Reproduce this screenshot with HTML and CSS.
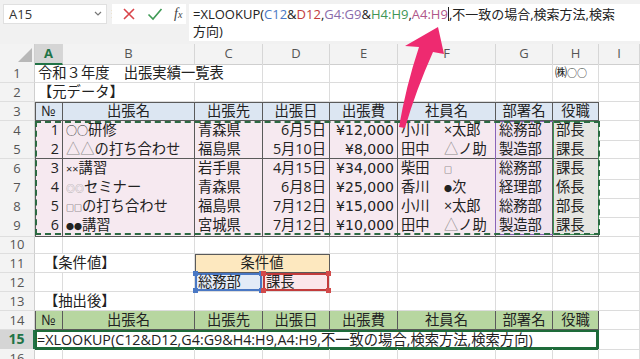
FILE: index.html
```html
<!DOCTYPE html>
<html lang="ja">
  <head>
    <meta charset="UTF-8" />
    <title>XLOOKUP</title>
    <link rel="stylesheet" href="styles.css">
  </head>
  <body>
    <div class="topbar">
      <div class="namebox">
        <span>A15</span>
        <svg class="chev" width="8" height="6" viewBox="0 0 8 6"><polyline points="1,1 4,4 7,1" fill="none" stroke="#777" stroke-width="1.2"/></svg>
      </div>
      <div class="grip">&#8942;</div>
      <div class="iconbox">
        <svg width="14" height="14" viewBox="0 0 14 14"><path d="M2 2 L12 12 M12 2 L2 12" stroke="#d9444a" stroke-width="1.6" fill="none"/></svg>
        <svg width="16" height="14" viewBox="0 0 16 14"><polyline points="1.5,7.5 6,12 14.5,2" stroke="#3f9a55" stroke-width="1.6" fill="none"/></svg>
        <span class="fx">f<span class="fx-x">x</span></span>
      </div>
      <div class="formula">
        <div class="fline">=XLOOKUP(<span class="r-blue">C12</span>&amp;<span class="r-red">D12</span>,<span class="r-purple">G4:G9</span>&amp;<span class="r-green">H4:H9</span>,<span class="r-pink">A4:H9</span><span class="caret"></span>,不一致の場合,検索方法,検索</div>
        <div class="fline">方向)</div>
      </div>
    </div>

    <div class="sheet">
      <div class="row colhead">
        <div class="corner"><svg width="14" height="14" viewBox="0 0 14 14"><polygon points="14,0 14,14 0,14" fill="#b8b8b8"/></svg></div>
        <div class="ch sel">A</div>
        <div class="ch">B</div>
        <div class="ch">C</div>
        <div class="ch">D</div>
        <div class="ch">E</div>
        <div class="ch">F</div>
        <div class="ch">G</div>
        <div class="ch">H</div>
        <div class="ch">I</div>
      </div>

      <div class="row">
        <div class="rh">1</div>
        <div class="c s3">令和３年度　出張実績一覧表</div>
        <div class="c"></div><div class="c"></div><div class="c"></div><div class="c"></div>
        <div class="c co"><span class="kabu">㈱</span>○○</div>
        <div class="c"></div>
      </div>

      <div class="row">
        <div class="rh">2</div>
        <div class="c s2">【元データ】</div>
        <div class="c"></div><div class="c"></div><div class="c"></div><div class="c"></div><div class="c"></div><div class="c"></div>
        <div class="c"></div>
      </div>

      <div class="row">
        <div class="rh">3</div>
        <div class="c t th l tp">№</div>
        <div class="c t th tp">出張名</div>
        <div class="c t th tp">出張先</div>
        <div class="c t th tp">出張日</div>
        <div class="c t th tp">出張費</div>
        <div class="c t th tp">社員名</div>
        <div class="c t th tp">部署名</div>
        <div class="c t th tp">役職</div>
        <div class="c"></div>
      </div>

      <div class="block">
        <div class="row">
          <div class="rh">4</div>
          <div class="c t d l num">1</div>
          <div class="c t d"><span class="sm">○○</span>研修</div>
          <div class="c t d">青森県</div>
          <div class="c t d num">6月5日</div>
          <div class="c t d num yen">¥12,000</div>
          <div class="c t d">小川　×太郎</div>
          <div class="c t d dg">総務部</div>
          <div class="c t d dh">部長</div>
          <div class="c"></div>
        </div>
        <div class="row">
          <div class="rh">5</div>
          <div class="c t d l num">2</div>
          <div class="c t d"><span class="lt">△△</span>の打ち合わせ</div>
          <div class="c t d">福島県</div>
          <div class="c t d num">5月10日</div>
          <div class="c t d num yen">¥8,000</div>
          <div class="c t d">田中　<span class="lt">△</span>ノ助</div>
          <div class="c t d dg">製造部</div>
          <div class="c t d dh">課長</div>
          <div class="c"></div>
        </div>
        <div class="row">
          <div class="rh">6</div>
          <div class="c t d l num">3</div>
          <div class="c t d"><span class="xx">××</span>講習</div>
          <div class="c t d">岩手県</div>
          <div class="c t d num">4月15日</div>
          <div class="c t d num yen">¥34,000</div>
          <div class="c t d">柴田　<span class="xs">□</span></div>
          <div class="c t d dg">総務部</div>
          <div class="c t d dh">課長</div>
          <div class="c"></div>
        </div>
        <div class="row">
          <div class="rh">7</div>
          <div class="c t d l num">4</div>
          <div class="c t d"><span class="ring">◎◎</span>セミナー</div>
          <div class="c t d">青森県</div>
          <div class="c t d num">6月8日</div>
          <div class="c t d num yen">¥25,000</div>
          <div class="c t d">香川　<span class="xs">●</span>次</div>
          <div class="c t d dg">経理部</div>
          <div class="c t d dh">係長</div>
          <div class="c"></div>
        </div>
        <div class="row">
          <div class="rh">8</div>
          <div class="c t d l num">5</div>
          <div class="c t d"><span class="xs">□□</span>の打ち合わせ</div>
          <div class="c t d">福島県</div>
          <div class="c t d num">7月12日</div>
          <div class="c t d num yen">¥15,000</div>
          <div class="c t d">小川　×太郎</div>
          <div class="c t d dg">総務部</div>
          <div class="c t d dh">部長</div>
          <div class="c"></div>
        </div>
        <div class="row">
          <div class="rh">9</div>
          <div class="c t d l num">6</div>
          <div class="c t d"><span class="xs">●●</span>講習</div>
          <div class="c t d">宮城県</div>
          <div class="c t d num">7月12日</div>
          <div class="c t d num yen">¥10,000</div>
          <div class="c t d">田中　<span class="lt">△</span>ノ助</div>
          <div class="c t d dg">製造部</div>
          <div class="c t d dh">課長</div>
          <div class="c"></div>
        </div>
        <div class="ref ref-g"></div>
        <div class="ref ref-h"></div>
        <div class="ants"></div>
      </div>

      <div class="row">
        <div class="rh">10</div>
        <div class="c"></div><div class="c"></div><div class="c"></div><div class="c"></div><div class="c"></div>
        <div class="c"></div><div class="c"></div><div class="c"></div><div class="c"></div>
      </div>

      <div class="row">
        <div class="rh">11</div>
        <div class="c s2 ind">【条件値】</div>
        <div class="c s2 cond">条件値</div>
        <div class="c"></div><div class="c"></div><div class="c"></div><div class="c"></div><div class="c"></div>
      </div>

      <div class="row">
        <div class="rh">12</div>
        <div class="c"></div><div class="c"></div>
        <div class="c pick pick-blue">総務部<i class="h tl"></i><i class="h tr"></i><i class="h bl"></i><i class="h br"></i></div>
        <div class="c pick pick-red">課長<i class="h tl"></i><i class="h tr"></i><i class="h bl"></i><i class="h br"></i></div>
        <div class="c"></div><div class="c"></div><div class="c"></div><div class="c"></div><div class="c"></div>
      </div>

      <div class="row">
        <div class="rh">13</div>
        <div class="c s2 ind">【抽出後】</div>
        <div class="c"></div><div class="c"></div><div class="c"></div><div class="c"></div><div class="c"></div><div class="c"></div>
        <div class="c"></div>
      </div>

      <div class="row">
        <div class="rh">14</div>
        <div class="c t tg l">№</div>
        <div class="c t tg">出張名</div>
        <div class="c t tg">出張先</div>
        <div class="c t tg">出張日</div>
        <div class="c t tg">出張費</div>
        <div class="c t tg">社員名</div>
        <div class="c t tg">部署名</div>
        <div class="c t tg">役職</div>
        <div class="c"></div>
      </div>

      <div class="row">
        <div class="rh active">15</div>
        <div class="c s8 edit">=XLOOKUP(C12&amp;D12,G4:G9&amp;H4:H9,A4:H9,不一致の場合,検索方法,検索方向)</div>
        <div class="c"></div>
      </div>

      <div class="row">
        <div class="rh">16</div>
        <div class="c"></div><div class="c"></div><div class="c"></div><div class="c"></div><div class="c"></div>
        <div class="c"></div><div class="c"></div><div class="c"></div><div class="c"></div>
      </div>
    </div>

    <svg class="arrow" width="640" height="359" viewBox="0 0 640 359">
      <path d="M438 27 L405 46 L419 47 Q406 86 399 127 L405 128 Q416 90 433 52 L444 54 Z" fill="#ee2a70"/>
    </svg>
  </body>
</html>
```

FILE: styles.css
```css
body {
  margin: 0;
  width: 640px;
  height: 359px;
  overflow: hidden;
  position: relative;
  background: #fff;
  font-family: "Open Sans", "Noto Sans CJK JP", sans-serif;
  color: #222;
}

/* formula bar */
.topbar {
  height: 44px;
  box-sizing: border-box;
  background: #f1f1f1;
  display: flex;
  align-items: flex-start;
  padding: 4px 0 0 3px;
}

.namebox {
  width: 104px;
  height: 20px;
  box-sizing: border-box;
  background: #fff;
  border: 1px solid #e0e0e0;
  display: flex;
  align-items: center;
  justify-content: space-between;
  padding: 0 4px 0 5px;
  font-size: 13px;
  color: #333;
}

.grip {
  width: 5px;
  font-size: 11px;
  color: #aaa;
  line-height: 20px;
  text-align: center;
}

.iconbox {
  width: 74px;
  height: 20px;
  box-sizing: border-box;
  background: #fff;
  display: flex;
  align-items: center;
  gap: 11px;
  padding-left: 10px;
}

.fx {
  font-family: "Liberation Serif", serif;
  font-style: italic;
  font-size: 14px;
  line-height: 14px;
  color: #444;
}

.fx-x {
  font-size: 10px;
}

.formula {
  margin-left: 3px;
  flex: 1;
  height: 37px;
  box-sizing: border-box;
  background: #fff;
  padding: 2px 0 0 4px;
  font-size: 13px;
  color: #222;
}

.fline {
  height: 17px;
  line-height: 16px;
  white-space: nowrap;
}

.caret {
  display: inline-block;
  width: 1px;
  height: 14px;
  background: #222;
  vertical-align: -2px;
}

.r-blue { color: #4a78c4; }
.r-red { color: #c23b3b; }
.r-purple { color: #8a6bab; }
.r-green { color: #3e9656; }
.r-pink { color: #b0578a; }

/* grid */
.row {
  display: grid;
  grid-template-columns: 35px 28px 132px 68px 67px 68px 98px 57px 46px 1fr;
  height: 19px;
}

.colhead {
  height: 20px;
  background: #f3f3f3;
}

.corner {
  box-sizing: border-box;
  border-right: 1px solid #cfcfcf;
  border-bottom: 1px solid #cfcfcf;
  display: flex;
  align-items: flex-end;
  justify-content: flex-end;
  padding: 0 2px 2px 0;
}

.ch {
  box-sizing: border-box;
  border-right: 1px solid #d6d6d6;
  border-bottom: 1px solid #cfcfcf;
  text-align: center;
  font-size: 13px;
  line-height: 19px;
  color: #555;
}

.ch.sel {
  background: #d5d5d5;
  border-bottom: 2px solid #217346;
  color: #217346;
  font-weight: bold;
}

.rh {
  box-sizing: border-box;
  background: #f3f3f3;
  border-right: 1px solid #cfcfcf;
  border-bottom: 1px solid #dedede;
  text-align: center;
  font-size: 13px;
  line-height: 18px;
  color: #555;
}

.rh.active {
  background: #d5d5d5;
  border-right: 2px solid #217346;
  color: #217346;
  font-weight: bold;
  font-size: 14px;
}

.c {
  box-sizing: border-box;
  border-right: 1px solid #dcdcdc;
  border-bottom: 1px solid #dcdcdc;
  padding: 0 3px;
  font-size: 14.3px;
  line-height: 18px;
  white-space: nowrap;
}

.s2 { grid-column: span 2; }
.s3 { grid-column: span 3; }
.s8 { grid-column: span 8; }

.ind { padding-left: 9px; }

.co {
  font-size: 10px;
  padding-left: 2px;
}

.kabu { font-size: 12px; }

/* tables */
.t {
  border-right-color: #5a5a5a;
  border-bottom-color: #5a5a5a;
}

.l { box-shadow: inset 1px 0 0 #5a5a5a; }
.tp { box-shadow: inset 0 1px 0 #5a5a5a; }
.l.tp { box-shadow: inset 1px 1px 0 #5a5a5a; }

.th {
  background: #dce6f2;
  text-align: center;
}

.tg {
  background: #b7d6a0;
  text-align: center;
}

.d { background: #f6e9f0; }
.dg { background: #efe3ef; }
.dh { background: #e6e6e2; }

.num { text-align: right; }
.yen { font-family: "DejaVu Sans", "Noto Sans CJK JP", sans-serif; font-size: 14px; }

.sm { font-size: 11px; }
.lt { color: #888; }
.xs { font-size: 8px; }
.xx { font-size: 11px; }
.ring {
  font-size: 9px;
  color: #999;
}

.block {
  position: relative;
}

.ref {
  position: absolute;
  top: 0;
  height: 114px;
  box-sizing: border-box;
}

.ref-g {
  left: 495px;
  width: 59px;
  border: 1px solid #8a63b8;
}

.ref-h {
  left: 553px;
  width: 46px;
  border: 1px solid #3e9656;
}

.ants {
  position: absolute;
  left: 35px;
  top: 0;
  width: 565px;
  height: 114px;
  box-sizing: border-box;
  border: 2px dashed #2c6a42;
}

/* condition cells */
.cond {
  background: #fde8bf;
  text-align: center;
  border-right-color: #5a5a5a;
  border-bottom-color: #5a5a5a;
  box-shadow: inset 1px 1px 0 #5a5a5a;
}

.pick {
  position: relative;
}

.pick-blue {
  background: #e3ebf7;
  box-shadow: inset 0 0 0 2px #4a78c4;
}

.pick-red {
  background: #fbe6ea;
  box-shadow: inset 0 0 0 2px #c23b3b;
}

.h {
  position: absolute;
  width: 5px;
  height: 5px;
}

.pick-blue .h { background: #4a78c4; }
.pick-red .h { background: #d24a4a; }

.h.tl { left: -2px; top: -2px; }
.h.tr { right: -2px; top: -2px; }
.h.bl { left: -2px; bottom: -2px; }
.h.br { right: -2px; bottom: -2px; }

.edit {
  background: #fff;
  box-shadow: inset 0 0 0 2px #1e6b3a;
  border-color: #1e6b3a;
  padding-left: 2px;
  line-height: 19px;
}

.arrow {
  position: absolute;
  left: 0;
  top: 0;
  pointer-events: none;
}
```
